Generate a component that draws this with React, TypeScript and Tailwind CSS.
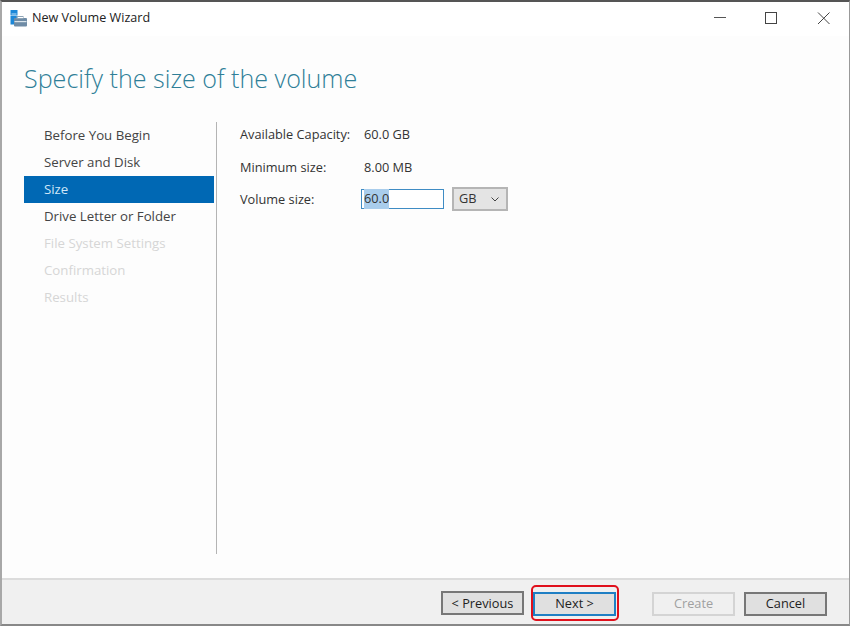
const font = { fontFamily: '"Open Sans", "Noto Sans", sans-serif' };

const steps = [
  { label: "Before You Begin", state: "done" },
  { label: "Server and Disk", state: "done" },
  { label: "Size", state: "active" },
  { label: "Drive Letter or Folder", state: "done" },
  { label: "File System Settings", state: "off" },
  { label: "Confirmation", state: "off" },
  { label: "Results", state: "off" },
];

function WizardIcon() {
  return (
    <svg width="17" height="17" viewBox="0 0 17 17" className="shrink-0">
      <rect x="0.5" y="0" width="7" height="5" fill="#1b87d8" />
      <rect x="0.5" y="5.5" width="7" height="9" fill="#1b87d8" />
      <rect x="1.5" y="3.5" width="5" height="1" fill="#bfe0f5" />
      <rect x="4" y="8" width="13" height="8.5" rx="1" fill="#6f8ca6" />
      <rect x="4.5" y="11" width="12" height="1.2" fill="#dbe5ec" />
      <rect x="7" y="6.5" width="6" height="2" fill="none" stroke="#8ea4b6" />
    </svg>
  );
}

function Btn({ children, focus, off }: { children: string; focus?: boolean; off?: boolean }) {
  return (
    <button
      type="button"
      className={
        "h-[24px] w-[83px] border-2 text-[12.75px] leading-none " +
        (off
          ? "border-[#d4d4d4] bg-[#f0f0f0] text-[#a0a0a0]"
          : focus
            ? "border-[#1f7fc4] bg-[#e0e0e0] text-[#222]"
            : "border-[#777] bg-[#e0e0e0] text-[#222]")
      }
    >
      {children}
    </button>
  );
}

export default function App() {
  return (
    <div
      style={font}
      className="flex h-[626px] w-[850px] flex-col overflow-hidden border-t-2 border-l-2 border-r border-b-2 border-t-[#555] border-l-[#a8a8a8] border-r-[#999] border-b-[#888] bg-[#fdfdfd] text-[#333]"
    >
      <div className="flex h-[34px] shrink-0 items-center bg-white pb-[2px] pl-2">
        <WizardIcon />
        <span className="ml-[5px] text-[12.6px] text-[#222]">New Volume Wizard</span>
        <div className="ml-auto flex items-center">
          <svg width="54" height="14" viewBox="0 0 54 14">
            <path d="M23 6.5h12" stroke="#555" strokeWidth="1" fill="none" />
          </svg>
          <svg width="52" height="14" viewBox="0 0 52 14">
            <rect x="20.5" y="1.5" width="11" height="11" stroke="#444" strokeWidth="1" fill="none" />
          </svg>
          <svg width="52" height="14" viewBox="0 0 52 14">
            <path d="M21 1.5l11.5 11.5M32.5 1.5L21 13" stroke="#444" strokeWidth="1" fill="none" />
          </svg>
        </div>
      </div>

      <div className="flex min-h-0 flex-1 flex-col">
        <h1 className="mt-[24px] ml-[22px] text-[25.1px] leading-[36px] font-light text-[#2f7f98]">
          Specify the size of the volume
        </h1>

        <div className="mt-[26px] flex h-[432px]">
          <div className="ml-[22px] w-[190px]">
            {steps.map((s) => (
              <div
                key={s.label}
                className={
                  "flex h-[27px] items-center pl-[20px] text-[13.25px] " +
                  (s.state === "active"
                    ? "bg-[#0068b4] text-[#cfe6f7]"
                    : s.state === "off"
                      ? "text-[#d6d6d6]"
                      : "text-[#444]")
                }
              >
                {s.label}
              </div>
            ))}
          </div>

          <div className="ml-[2px] w-[1px] bg-[#b4b4b4]" />

          <div className="ml-[23px] flex flex-col pt-[2px] text-[12.75px] text-[#333]">
            <div className="flex h-[22px] items-center">
              <span className="w-[124px]">Available Capacity:</span>
              <span>60.0 GB</span>
            </div>
            <div className="mt-[11px] flex h-[22px] items-center">
              <span className="w-[124px]">Minimum size:</span>
              <span>8.00 MB</span>
            </div>
            <div className="mt-[8px] flex items-center">
              <span className="w-[121px] pt-[1px]">Volume size:</span>
              <div className="flex h-[20px] w-[83px] items-center border border-[#3f8cc4] bg-white pl-[2px]">
                <span className="bg-[#a9cdec] text-[#333]">60.0</span>
              </div>
              <div className="ml-[8px] flex h-[24px] w-[56px] items-center justify-between border-2 border-[#b5b5b5] bg-[#e4e4e4] pr-[7px] pl-[5px]">
                <span>GB</span>
                <svg width="8" height="5" viewBox="0 0 8 5">
                  <path d="M0.5 0.5L4 4l3.5-3.5" stroke="#444" strokeWidth="1" fill="none" />
                </svg>
              </div>
            </div>
          </div>
        </div>

        <div className="mt-auto flex h-[46px] shrink-0 items-center justify-end border-t-2 border-[#dcdcdc] bg-[#f0f0f0] pt-[2px] pr-[22px]">
          <Btn>{"< Previous"}</Btn>
          <div className="relative ml-[9px]">
            <Btn focus>{"Next >"}</Btn>
            <div className="absolute -top-[5px] -right-[3px] -bottom-[5px] -left-[2px] rounded-[5px] border-2 border-[#e0101c]" />
          </div>
          <div className="ml-[36px]">
            <Btn off>Create</Btn>
          </div>
          <div className="ml-[9px]">
            <Btn>Cancel</Btn>
          </div>
        </div>
      </div>
    </div>
  );
}
